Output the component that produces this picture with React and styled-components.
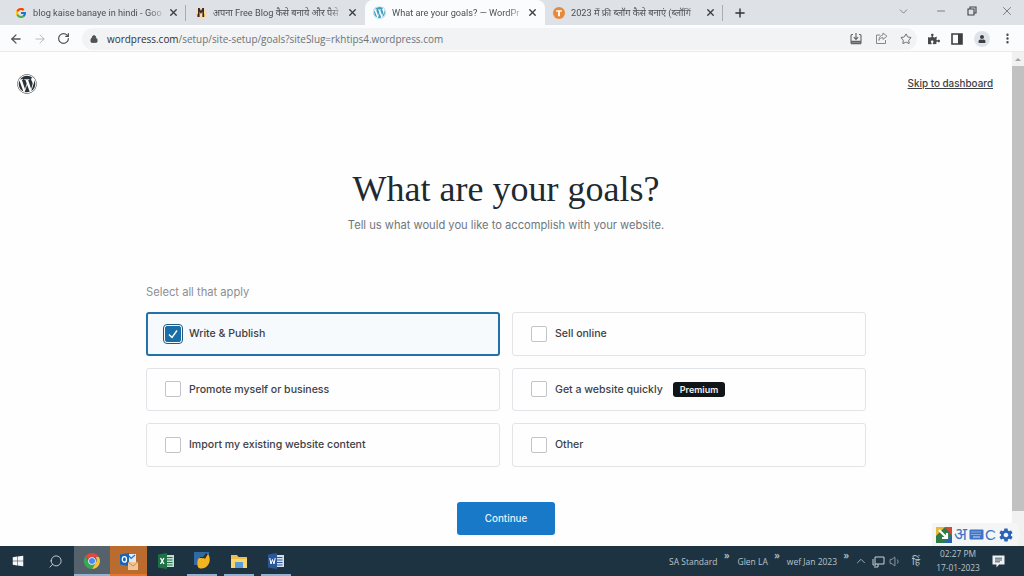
import React from 'react';
import styled, { createGlobalStyle } from 'styled-components';
import { FaWordpress, FaWindows, FaPuzzlePiece, FaUser } from 'react-icons/fa';
import { FcGoogle } from 'react-icons/fc';
import { IoMdSettings } from 'react-icons/io';
import {
  ArrowLeft, ArrowRight, RotateCw, Lock, Star, ChevronDown, Minus, X, Plus,
  EllipsisVertical, Search, ChevronUp, Volume1,
} from 'lucide-react';

const GlobalStyle = createGlobalStyle`
  html, body { margin: 0; padding: 0; height: 100%; overflow: hidden; background: #fff; }
  #root { height: 100%; }
  * { box-sizing: border-box; }
`;

const Screen = styled.div`
  width: 1024px;
  height: 576px;
  display: flex;
  flex-direction: column;
  position: relative;
  overflow: hidden;
  font-family: 'Open Sans', 'Noto Sans', sans-serif;
`;

/* browser chrome */
const TabStrip = styled.div`
  height: 25px;
  flex: none;
  background: #dee1e6;
  display: flex;
  align-items: stretch;
`;

const Tab = styled.div`
  position: relative;
  width: ${(p) => p.$w}px;
  display: flex;
  align-items: center;
  gap: 6px;
  padding: 0 7px 0 ${(p) => p.$pad}px;
  background: ${(p) => (p.$active ? '#fbfcfd' : 'transparent')};
  border-radius: ${(p) => (p.$active ? '8px 8px 0 0' : '0')};

  &::after {
    content: '';
    display: ${(p) => (p.$sep ? 'block' : 'none')};
    position: absolute;
    right: 0;
    top: 5px;
    bottom: 4px;
    width: 1px;
    background: #a9adb2;
  }
`;

const TabTitle = styled.span`
  flex: 1;
  min-width: 0;
  overflow: hidden;
  white-space: nowrap;
  font-family: 'Roboto', 'Noto Sans', sans-serif;
  font-size: 9.2px;
  color: #4c5055;
  mask-image: linear-gradient(to right, #000 90%, rgba(0, 0, 0, 0.25));
`;

const TabClose = styled(X)`
  flex: none;
  width: 11px;
  height: 11px;
  color: #3d4043;
  stroke-width: 3;
`;

const NewTab = styled(Plus)`
  width: 14px;
  height: 14px;
  margin: 6px 0 0 10px;
  color: #303236;
  stroke-width: 2.4;
`;

const WindowControls = styled.div`
  margin-left: auto;
  display: flex;
  align-items: center;
  padding: 0 10px 3px 0;
  color: #50545a;
`;

const WindowControl = styled.span`
  display: flex;
  margin-left: ${(p) => p.$ml}px;
`;

const Toolbar = styled.div`
  height: 27px;
  flex: none;
  display: flex;
  align-items: center;
  padding: 1px 10px 0 9px;
  background: #fbfcfd;
  border-bottom: 1px solid #e8eaed;
  color: #5f6368;
`;

const NavIcons = styled.div`
  display: flex;
  align-items: center;
  gap: 10px;
  margin-right: 12px;
`;

const Omnibox = styled.div`
  width: 836px;
  height: 22px;
  border-radius: 11px;
  background: #f1f3f4;
  display: flex;
  align-items: center;
  padding: 0 5px 0 8px;
  gap: 9px;
`;

const Url = styled.span`
  flex: 1;
  font-size: 9.95px;
  color: #6f7276;
  white-space: nowrap;
  b { font-weight: 400; color: #303236; }
`;

const OmniIcons = styled.div`
  display: flex;
  align-items: center;
  gap: 12px;
`;

const ToolbarRight = styled.div`
  display: flex;
  align-items: center;
  gap: 11px;
  margin-left: 11px;
  color: #50545a;
`;

const Avatar = styled.span`
  width: 16px;
  height: 16px;
  border-radius: 50%;
  background: #dfe3ea;
  display: flex;
  align-items: center;
  justify-content: center;
  color: #3c4043;
`;

/* page */
const Viewport = styled.div`
  flex: 1;
  min-height: 0;
  display: flex;
`;

const Page = styled.main`
  flex: 1;
  min-width: 0;
  background: #fefefe;
  display: flex;
  flex-direction: column;
  align-items: center;
`;

const Header = styled.div`
  align-self: stretch;
  display: flex;
  justify-content: space-between;
  align-items: center;
  padding: 22px 19px 0 17px;
  color: #2c3338;
`;

const Skip = styled.a`
  font-family: 'Inter', sans-serif;
  font-size: 9.9px;
  font-weight: 500;
  color: #3c4146;
  text-decoration: underline;
  margin-top: -2px;
`;

const Title = styled.h1`
  margin: 75px 0 0;
  font-family: 'Liberation Serif', serif;
  font-weight: 400;
  font-size: 36px;
  line-height: 40px;
  color: #1f2a30;
`;

const Subtitle = styled.p`
  margin: 8px 0 0;
  font-family: 'Inter', sans-serif;
  font-size: 11.15px;
  line-height: 16px;
  color: #70767c;
`;

const Goals = styled.section`
  width: 720px;
  margin-top: 51px;
`;

const Hint = styled.div`
  font-family: 'Inter', sans-serif;
  font-size: 11.2px;
  line-height: 16px;
  color: #8c8f94;
  margin-bottom: 12px;
`;

const Grid = styled.div`
  display: grid;
  grid-template-columns: 354px 354px;
  grid-auto-rows: 43.5px;
  gap: 12px;
`;

const Option = styled.div`
  display: flex;
  align-items: center;
  gap: 8px;
  border-radius: 3px;
  border: ${(p) => (p.$checked ? '2px solid #2271a8' : '1px solid #e2e4e7')};
  padding-left: ${(p) => (p.$checked ? 17 : 18)}px;
  background: ${(p) => (p.$checked ? '#f7fafd' : '#fefefe')};
`;

const Box = styled.span`
  flex: none;
  width: 16px;
  height: 16px;
  border-radius: 2px;
  border: 1px solid #c3c4c7;
  background: #fff;
  display: flex;
  align-items: center;
  justify-content: center;
  ${(p) => p.$checked && `
    background: #1a6ea8;
    border-color: #1a6ea8;
    outline: 1.5px solid #21597f;
    outline-offset: 1px;
  `}
`;

const OptionLabel = styled.span`
  font-family: 'Inter', sans-serif;
  font-size: 10.55px;
  font-weight: 500;
  color: #3c4146;
`;

const Premium = styled.span`
  margin-left: 2px;
  height: 15px;
  padding: 0 7px;
  border-radius: 3px;
  background: #101517;
  color: #f0f0f0;
  font-family: 'Inter', sans-serif;
  font-size: 9px;
  font-weight: 600;
  display: flex;
  align-items: center;
`;

const Continue = styled.button`
  margin-top: 35px;
  width: 98px;
  height: 33px;
  border: none;
  border-radius: 3px;
  background: #1779c8;
  color: #e8f2fa;
  font-family: 'Inter', sans-serif;
  font-size: 9.8px;
  font-weight: 500;
`;

const Scrollbar = styled.div`
  width: 12px;
  flex: none;
  background: #f1f1f1;
  display: flex;
  flex-direction: column;
  align-items: center;
`;

const ScrollArrow = styled.span`
  width: 0;
  height: 0;
  margin: 6px 0 5px;
  border-left: 3px solid transparent;
  border-right: 3px solid transparent;
  border-bottom: 3px solid #a3a3a3;
`;

const Thumb = styled.div`
  width: 100%;
  height: 445px;
  background: #c1c1c1;
`;

/* IME bar floats over the page */
const ImeBar = styled.div`
  position: absolute;
  left: 932px;
  top: 523px;
  height: 23px;
  width: 88px;
  display: flex;
  align-items: center;
  padding-left: 4px;
  background: #f4f5f5;
  clip-path: polygon(0 0, 97% 0, 100% 50%, 97% 100%, 0 100%);
  color: #3f74c8;
`;

const ImeDeva = styled.span`
  margin: -3px 2px 0 2px;
  font-family: 'Noto Sans', sans-serif;
  font-size: 17px;
  line-height: 1;
`;

const ImeLetter = styled.span`
  margin: 0 2px 0 1px;
  font-family: 'Liberation Sans', sans-serif;
  font-size: 15px;
  line-height: 1;
`;

/* taskbar */
const Taskbar = styled.footer`
  height: 30px;
  flex: none;
  background: #1e3341;
  display: flex;
  align-items: stretch;
  color: #c9d1d6;
`;

const TaskButton = styled.div`
  width: 36.8px;
  display: flex;
  align-items: center;
  justify-content: center;
  background-color: ${(p) => p.$bg || 'transparent'};
  background-image: ${(p) => (p.$line ? `linear-gradient(${p.$line}, ${p.$line})` : 'none')};
  background-repeat: no-repeat;
  background-position: center bottom;
  background-size: ${(p) => (p.$short ? '30px 2px' : '100% 2px')};
`;

const SearchIcon = styled(Search)`
  transform: scaleX(-1);
`;

const Tray = styled.div`
  margin-left: auto;
  display: flex;
  align-items: center;
  font-family: 'Open Sans', 'Noto Sans', sans-serif;
  font-size: 8.5px;
  color: #b9c3c9;
`;

const Toolband = styled.span`
  position: relative;
  white-space: nowrap;
  margin-right: ${(p) => p.$mr}px;
  sup {
    position: absolute;
    right: -12px;
    top: -8px;
    font-size: 10px;
    font-weight: 600;
  }
`;

const TrayIcon = styled.span`
  display: flex;
  margin: 0 4px;
`;

const ImeLang = styled.span`
  margin-left: 10px;
  font-size: 10px;
`;

const Clock = styled.div`
  width: 48px;
  margin-left: 14px;
  text-align: center;
  line-height: 14px;
  font-size: 8.4px;
`;

const Notify = styled.span`
  display: flex;
  margin: 0 19px 0 10px;
`;

const TabFavicon = styled.span`
  flex: none;
  display: flex;
  width: 13px;
  height: 13px;
  border-radius: 50%;
  background: #fff;
  color: #3f9fc2;
`;

function BlogIcon() {
  return (
    <svg width="12" height="13" viewBox="0 0 12 13">
      <circle cx="6" cy="7" r="5.5" fill="#f6d9b8" />
      <path d="M3 2h1.6l1.4 3 1.4-3H9v9H7.4V5.5L6 8 4.6 5.5V11H3z" fill="#3b2a20" />
      <path d="M2 8h1v3H2z" fill="#e2562b" />
      <path d="M9 8h1v3H9z" fill="#f2b632" />
    </svg>
  );
}

function OrangeIcon() {
  return (
    <svg width="12" height="12" viewBox="0 0 12 12">
      <circle cx="6" cy="6" r="6" fill="#e8893a" />
      <path d="M3.2 3.2h5.6v1.6H6.9v4.4H5.1V4.8H3.2z" fill="#fff" />
    </svg>
  );
}

function DownloadBox() {
  return (
    <svg width="14" height="14" viewBox="0 0 14 14" fill="none" stroke="#5f6368" strokeWidth="1.1">
      <path d="M4 2.5H3A1 1 0 0 0 2 3.5V11h10V3.5a1 1 0 0 0-1-1h-1" />
      <path d="M7 1v6.2M4.8 5.2 7 7.4l2.2-2.2" />
      <path d="M2 9.5h10M2 11.6h10" strokeWidth="1.5" />
    </svg>
  );
}

function ShareIcon() {
  return (
    <svg width="13" height="13" viewBox="0 0 13 13" fill="none" stroke="#85888c" strokeWidth="1">
      <path d="M5 3H1.5v8.5h9V8" />
      <path d="M8 1l4 3.2-4 3.2V5.6C5.8 5.6 4.6 6.6 4 8.4 4 5.4 5.4 3.2 8 2.9z" />
    </svg>
  );
}

function SidePanel() {
  return (
    <svg width="12" height="12" viewBox="0 0 12 12">
      <path d="M1 1h10v10H1z" fill="none" stroke="#3d4043" strokeWidth="1.6" />
      <path d="M7 1h4v10H7z" fill="#3d4043" />
    </svg>
  );
}

function RestoreIcon() {
  return (
    <svg width="10" height="10" viewBox="0 0 10 10" fill="none" stroke="#3f4247" strokeWidth="1.1">
      <path d="M1 3h6v6H1z" />
      <path d="M3 3V1h6v6H7" />
    </svg>
  );
}

function ChromeIcon() {
  return (
    <svg width="18" height="18" viewBox="0 0 18 18">
      <path d="M9 1a8 8 0 0 1 6.9 4H9a4 4 0 0 0-3.7 2.5L2.6 4A8 8 0 0 1 9 1z" fill="#dd4b3e" />
      <path d="M15.9 5A8 8 0 0 1 9 17l3.4-6a4 4 0 0 0 0-6z" fill="#f5c33b" />
      <path d="M9 17A8 8 0 0 1 2.6 4l3.4 6.8A4 4 0 0 0 12.4 11z" fill="#3aa757" />
      <circle cx="9" cy="9" r="3.8" fill="#fff" />
      <circle cx="9" cy="9" r="3" fill="#4a8af4" />
    </svg>
  );
}

function OutlookIcon() {
  return (
    <svg width="20" height="20" viewBox="0 0 20 20">
      <path d="M8 3h9v8H8z" fill="#dfe9f5" />
      <path d="M10 5l2.2 2.4L16 4" fill="none" stroke="#2a6fc0" strokeWidth="1.2" />
      <path d="M1 3.5 10 2v13l-9-1.5z" fill="#1565b8" />
      <ellipse cx="5.4" cy="8.4" rx="2.1" ry="2.7" fill="none" stroke="#fff" strokeWidth="1.3" />
      <path d="M9 11h10v8H9z" fill="#f1c595" />
      <path d="M9 11l5 4 5-4" fill="none" stroke="#c98a50" strokeWidth="1" />
    </svg>
  );
}

function OfficeIcon({ bg, page, letter }) {
  return (
    <svg width="18" height="18" viewBox="0 0 18 18">
      <path d="M8 3h9v12H8z" fill={page} />
      <path d="M9.5 5.5h6M9.5 8h6M9.5 10.5h6M9.5 13h6" stroke={bg} strokeWidth="1" />
      <path d="M1 2.5 10 1v16l-9-1.5z" fill={bg} />
      {letter === 'x' ? (
        <path d="M3.5 6l3.5 6M7 6l-3.5 6" stroke="#fff" strokeWidth="1.4" />
      ) : (
        <path d="M2.8 6l1.2 6 1.5-4.5L7 12l1.2-6" stroke="#fff" strokeWidth="1" fill="none" />
      )}
    </svg>
  );
}

function PaintIcon() {
  return (
    <svg width="20" height="20" viewBox="0 0 20 20">
      <path d="M2 1h15v5H8v8H2z" fill="#2f6aa5" />
      <path d="M6 8c2-2 4 0 6-1s3-4 3-5c3 3 4 8 1 12s-7 4-9 3-2-6-1-9z" fill="#f4b41f" />
      <path d="M11 6l3-4 2 1-3 5z" fill="#3a2f20" />
    </svg>
  );
}

function FolderIcon() {
  return (
    <svg width="18" height="18" viewBox="0 0 18 18">
      <path d="M1 3h6l1.5 2H17v11H1z" fill="#eebd4c" />
      <path d="M1 7h16v9H1z" fill="#f7d673" />
      <path d="M5 10h8v6H5z" fill="#5a9fd4" />
    </svg>
  );
}

function PcIcon() {
  return (
    <svg width="13" height="13" viewBox="0 0 13 13" fill="none" stroke="#c9d1d6" strokeWidth="1">
      <path d="M3 2h9v7H3z" />
      <path d="M1 4v6h3M2 12h4M6 9v3" />
    </svg>
  );
}

function NotifyIcon() {
  return (
    <svg width="13" height="13" viewBox="0 0 13 13">
      <path d="M0.5 0.5h12v9H7L4.5 12.5V9.5H0.5z" fill="#eef1f3" />
      <path d="M3 3.2h7M3 5h7M3 6.8h5" stroke="#1e3341" strokeWidth="0.8" />
    </svg>
  );
}

function KeyboardIcon() {
  return (
    <svg width="15" height="11" viewBox="0 0 15 11">
      <rect x="0.5" y="0.5" width="14" height="10" rx="1" fill="#3f74c8" />
      <path d="M2.5 3h10M2.5 5.5h10" stroke="#cfe0f5" strokeWidth="1" strokeDasharray="1 1" />
      <path d="M4 8h7" stroke="#cfe0f5" strokeWidth="1" />
    </svg>
  );
}

function ImeLogo() {
  return (
    <svg width="16" height="16" viewBox="0 0 16 16">
      <path d="M0 0h16v16H0z" fill="#2f7d46" />
      <path d="M0 0h9L0 9z" fill="#e9b93a" />
      <path d="M16 0v9L9 0z" fill="#d9463a" />
      <path d="M3 3l8 8M11 6v5H6" stroke="#fff" strokeWidth="2.2" fill="none" />
      <path d="M8 16h8V8z" fill="#2a62b8" />
    </svg>
  );
}

const tabs = [
  { title: 'blog kaise banaye in hindi - Goo', w: 186, pad: 15, sep: true, icon: <FcGoogle size={12} /> },
  { title: 'अपना Free Blog कैसे बनाये और पैसे', w: 179, pad: 9, icon: <BlogIcon /> },
  { title: 'What are your goals? — WordPr', w: 180, pad: 8, active: true, icon: <TabFavicon><FaWordpress size={13} /></TabFavicon> },
  { title: '2023 में फ्री ब्लॉग कैसे बनाएं (ब्लॉगिं', w: 178, pad: 8, sep: true, icon: <OrangeIcon /> },
];

const goals = [
  { label: 'Write & Publish', checked: true },
  { label: 'Sell online' },
  { label: 'Promote myself or business' },
  { label: 'Get a website quickly', premium: true },
  { label: 'Import my existing website content' },
  { label: 'Other' },
];

export default function App() {
  return (
    <>
      <GlobalStyle />
      <Screen>
        <TabStrip>
          {tabs.map((t) => (
            <Tab key={t.title} $w={t.w} $pad={t.pad} $active={t.active} $sep={t.sep}>
              {t.icon}
              <TabTitle>{t.title}</TabTitle>
              <TabClose />
            </Tab>
          ))}
          <NewTab />
          <WindowControls>
            <WindowControl $ml={0}><ChevronDown size={13} strokeWidth={1.2} /></WindowControl>
            <WindowControl $ml={25}><Minus size={12} strokeWidth={1.4} /></WindowControl>
            <WindowControl $ml={20}><RestoreIcon /></WindowControl>
            <WindowControl $ml={23}><X size={14} strokeWidth={1.2} /></WindowControl>
          </WindowControls>
        </TabStrip>

        <Toolbar>
          <NavIcons>
            <ArrowLeft size={14} strokeWidth={2.2} color="#4f5357" />
            <ArrowRight size={14} strokeWidth={1.6} color="#b4b7bb" />
            <RotateCw size={13} strokeWidth={2.2} color="#4f5357" />
          </NavIcons>
          <Omnibox>
            <Lock size={8} strokeWidth={3} color="#4f5357" fill="#4f5357" />
            <Url><b>wordpress.com</b>/setup/site-setup/goals?siteSlug=rkhtips4.wordpress.com</Url>
            <OmniIcons>
              <DownloadBox />
              <ShareIcon />
              <Star size={12} strokeWidth={1.6} color="#45484c" />
            </OmniIcons>
          </Omnibox>
          <ToolbarRight>
            <FaPuzzlePiece size={12} color="#46494d" />
            <SidePanel />
            <Avatar><FaUser size={8} /></Avatar>
            <EllipsisVertical size={13} strokeWidth={2.4} color="#46494d" />
          </ToolbarRight>
        </Toolbar>

        <Viewport>
          <Page>
            <Header>
              <FaWordpress size={20} />
              <Skip>Skip to dashboard</Skip>
            </Header>
            <Title>What are your goals?</Title>
            <Subtitle>Tell us what would you like to accomplish with your website.</Subtitle>
            <Goals>
              <Hint>Select all that apply</Hint>
              <Grid>
                {goals.map((g) => (
                  <Option key={g.label} $checked={g.checked}>
                    <Box $checked={g.checked}>
                      {g.checked && (
                        <svg width="12" height="12" viewBox="0 0 12 12" fill="none" stroke="#fff" strokeWidth="1.4">
                          <path d="M2 6.5 5 9.5 10 2.5" />
                        </svg>
                      )}
                    </Box>
                    <OptionLabel>{g.label}</OptionLabel>
                    {g.premium && <Premium>Premium</Premium>}
                  </Option>
                ))}
              </Grid>
            </Goals>
            <Continue>Continue</Continue>
          </Page>
          <Scrollbar>
            <ScrollArrow />
            <Thumb />
          </Scrollbar>
        </Viewport>

        <ImeBar>
          <ImeLogo />
          <ImeDeva>अ</ImeDeva>
          <KeyboardIcon />
          <ImeLetter>C</ImeLetter>
          <IoMdSettings size={16} color="#2a62b8" />
        </ImeBar>

        <Taskbar>
          <TaskButton><FaWindows size={12} color="#f4f6f7" /></TaskButton>
          <TaskButton><SearchIcon size={15} strokeWidth={1.4} color="#d5dadd" /></TaskButton>
          <TaskButton $bg="#56626b" $line="#8fb3d0"><ChromeIcon /></TaskButton>
          <TaskButton $bg="#b96c2d" $line="#e8752a"><OutlookIcon /></TaskButton>
          <TaskButton><OfficeIcon bg="#1e7145" page="#bfe0cc" letter="x" /></TaskButton>
          <TaskButton $line="#8fb3d0" $short><PaintIcon /></TaskButton>
          <TaskButton $line="#8fb3d0" $short><FolderIcon /></TaskButton>
          <TaskButton $line="#8fb3d0" $short><OfficeIcon bg="#2b579a" page="#d5dfee" letter="w" /></TaskButton>
          <Tray>
            <Toolband $mr={20}>SA Standard<sup>»</sup></Toolband>
            <Toolband $mr={19}>Glen LA<sup>»</sup></Toolband>
            <Toolband $mr={17}>wef Jan 2023<sup>»</sup></Toolband>
            <ChevronUp size={14} strokeWidth={1.4} />
            <TrayIcon><PcIcon /></TrayIcon>
            <Volume1 size={13} strokeWidth={1.3} />
            <ImeLang>हिं</ImeLang>
            <Clock>02:27 PM<br />17-01-2023</Clock>
            <Notify><NotifyIcon /></Notify>
          </Tray>
        </Taskbar>
      </Screen>
    </>
  );
}
